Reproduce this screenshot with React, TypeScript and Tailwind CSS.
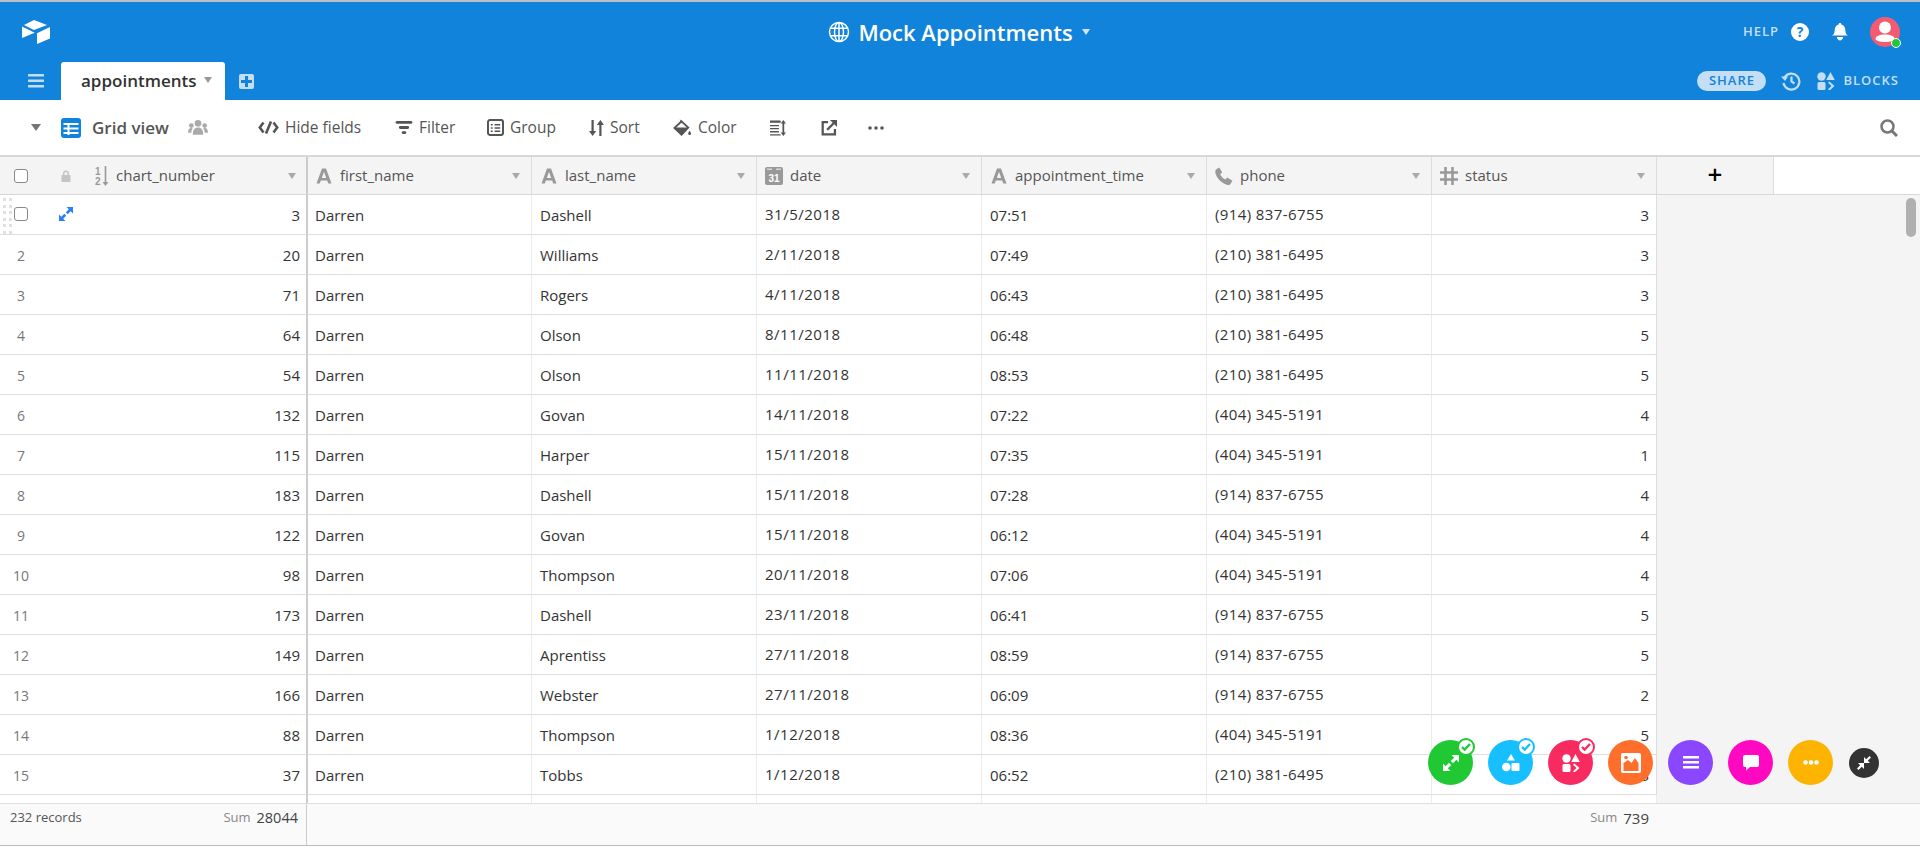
import React from "react";

const rows: [number, number, string, string, string, string, number][] = [
  [1, 3, "Dashell", "31/5/2018", "07:51", "(914) 837-6755", 3],
  [2, 20, "Williams", "2/11/2018", "07:49", "(210) 381-6495", 3],
  [3, 71, "Rogers", "4/11/2018", "06:43", "(210) 381-6495", 3],
  [4, 64, "Olson", "8/11/2018", "06:48", "(210) 381-6495", 5],
  [5, 54, "Olson", "11/11/2018", "08:53", "(210) 381-6495", 5],
  [6, 132, "Govan", "14/11/2018", "07:22", "(404) 345-5191", 4],
  [7, 115, "Harper", "15/11/2018", "07:35", "(404) 345-5191", 1],
  [8, 183, "Dashell", "15/11/2018", "07:28", "(914) 837-6755", 4],
  [9, 122, "Govan", "15/11/2018", "06:12", "(404) 345-5191", 4],
  [10, 98, "Thompson", "20/11/2018", "07:06", "(404) 345-5191", 4],
  [11, 173, "Dashell", "23/11/2018", "06:41", "(914) 837-6755", 5],
  [12, 149, "Aprentiss", "27/11/2018", "08:59", "(914) 837-6755", 5],
  [13, 166, "Webster", "27/11/2018", "06:09", "(914) 837-6755", 2],
  [14, 88, "Thompson", "1/12/2018", "08:36", "(404) 345-5191", 5],
  [15, 37, "Tobbs", "1/12/2018", "06:52", "(210) 381-6495", 3],
];

const Caret = ({ c = "#aaa", w = 8, h = 6 }: { c?: string; w?: number; h?: number }) => (
  <svg width={w} height={h} viewBox="0 0 8 6" preserveAspectRatio="none" className="shrink-0"><path d="M0 0h8L4 6z" fill={c} /></svg>
);
const AIcon = () => (
  <svg width="16" height="16" viewBox="0 0 16 16"><path d="M.5 15.500 6 .5h4l5.500 15h-3.300l-1-3H4.800l-1 3zM5.800 9.900h4.400L8 3.800z" fill="#999" /></svg>
);
const CalIcon = () => (
  <svg width="18" height="18" viewBox="0 0 18 18" className="shrink-0"><rect width="18" height="18" rx="2" fill="#999" /><rect x="2" y="1.500" width="5" height="1.500" fill="#fff" opacity=".6" /><rect x="11" y="1.500" width="5" height="1.500" fill="#fff" opacity=".6" /><text x="9" y="14.500" textAnchor="middle" fontSize="10" fontWeight="700" fill="#fff" fontFamily="Liberation Sans, sans-serif">31</text></svg>
);
const PhoneIcon = () => (
  <svg width="18" height="18" viewBox="0 0 18 18" className="shrink-0"><path d="M1 2.500 4.200.5l3 4.700-2 2c.8 2 2.800 4.200 5 5.200l2.200-1.900 5 3.300-1.900 3.200c-.6.8-2 1.300-3.500.8C6.500 16.200 2 11.500.5 6.500.1 4.900.3 3.300 1 2.500z" fill="#999" /></svg>
);
const HashIcon = () => (
  <svg width="18" height="18" viewBox="0 0 18 18" stroke="#999" strokeWidth="2.600" fill="none" className="shrink-0"><path d="M5.500 0v18M12.500 0v18M0 5.500h18M0 12.500h18" /></svg>
);
const SortNumIcon = () => (
  <svg width="14" height="20" viewBox="0 0 14 20" className="shrink-0">
    <text x="0" y="9" fontSize="10" fontWeight="700" fill="#999" fontFamily="Liberation Sans, sans-serif">1</text>
    <text x="0" y="19" fontSize="10" fontWeight="700" fill="#999" fontFamily="Liberation Sans, sans-serif">2</text>
    <path d="M9.700 0h1.600v16h2.200l-3 4-3-4h2.200z" fill="#999" />
  </svg>
);

const ExpandIcon = ({ c = "#fff", s = 14 }: { c?: string; s?: number }) => (
  <svg width={s} height={s} viewBox="0 0 14 14" fill={c}>
    <path d="M7.500 0H14V6.500L11.700 4.200 8.700 7.200 6.800 5.300 9.800 2.300z" />
    <path d="M6.500 14H0V7.500L2.300 9.800 5.300 6.800 7.200 8.700 4.200 11.700z" />
  </svg>
);

const ShapesIcon = ({ c = "#fff" }: { c?: string }) => (
  <svg width="18" height="18" viewBox="0 0 18 18" fill={c} className="shrink-0">
    <circle cx="4.500" cy="4.500" r="4.200" />
    <path d="M13.500 0l4.300 8H9.200z" />
    <rect x="0.500" y="10" width="8" height="8" rx="1.500" />
    <path d="M11 10.800l1.400-1.400L17.500 14l-5.100 4.600L11 17.200l3.500-3.200z" />
  </svg>
);

function Header({ icon, label, width, pad = "pl-[8px]" }: { icon: React.ReactNode; label: string; width: string; pad?: string }) {
  return (
    <div className={`flex h-full items-center gap-[8px] border-r border-[#dcdcdc] pr-[11px] ${pad} ${width}`}>
      <span className="flex w-[17px] shrink-0 items-center justify-center">{icon}</span>
      <span className="flex-1 text-[15px] text-[#555]">{label}</span>
      <Caret />
    </div>
  );
}

const ToolItem = ({ icon, label, className }: { icon: React.ReactNode; label: string; className: string }) => (
  <div className={`flex shrink-0 items-center gap-[6px] whitespace-nowrap text-[15.5px] text-[#555] ${className}`}>
    {icon}
    <span>{label}</span>
  </div>
);

const Check = ({ c, border }: { c: string; border: string }) => (
  <span className={`absolute right-[-2px] top-[-2px] flex h-[18px] w-[18px] items-center justify-center rounded-full border-2 bg-white ${border}`}>
    <svg width="10" height="8" viewBox="0 0 11 9" fill="none" stroke={c} strokeWidth="2.600"><path d="M1 4.500 4 7.500 10 1.200" /></svg>
  </span>
);

const Fab = ({ bg, children, check, border }: { bg: string; children: React.ReactNode; check?: string; border?: string }) => (
  <div className={`relative flex h-[45px] w-[45px] items-center justify-center rounded-full ${bg}`}>
    {children}
    {check && <Check c={check} border={border ?? ""} />}
  </div>
);

export default function App() {
  return (
    <div className="relative flex h-[848px] w-[1920px] flex-col overflow-hidden bg-white font-['Open_Sans','Noto_Sans',sans-serif]">
      {/* blue app bar */}
      <div className="h-[100px] shrink-0 border-t-2 border-[#b8bfc6] bg-[#1283da]">
        <div className="flex h-[60px] items-center pl-[22px] pr-[20px]">
          <div className="flex-1">
            <svg width="28" height="24" viewBox="0 0 28 24" fill="#fff" className="block">
              <path d="M12 0 2 5l10 5 13-5z" />
              <path d="M0 6.500v11.500l12.700-5.300z" />
              <path d="M15 13.300V24l13-5.500V7z" />
            </svg>
          </div>
          <div className="flex items-center pr-[4px]">
            <svg width="22" height="22" viewBox="0 0 22 22" fill="none" stroke="#fff" strokeWidth="1.500" className="mr-[8px]">
              <circle cx="11" cy="11" r="9.500" />
              <ellipse cx="11" cy="11" rx="4.500" ry="9.500" />
              <path d="M2.400 7.200h17.200M2.400 14.800h17.200M11 1.500v19" />
            </svg>
            <span className="text-[22px] font-semibold text-white">Mock Appointments</span>
            <span className="ml-[9px] flex"><Caret c="#cfe6f8" /></span>
          </div>
          <div className="flex flex-1 items-center justify-end">
            <span className="mr-[12px] text-[13px] font-semibold tracking-[1px] text-[#c4dff5]">HELP</span>
            <span className="mr-[23px] flex h-[18px] w-[18px] items-center justify-center rounded-full bg-white text-[14px] font-bold leading-none text-[#1283da]">?</span>
            <svg width="16" height="18" viewBox="0 0 18 20" fill="#fff" className="mr-[22px]">
              <path d="M9 0c.9 0 1.500.6 1.500 1.500C13.500 2.300 15 5 15 8c0 3.200 1 4.600 3 6H0c2-1.400 3-2.800 3-6 0-3 1.500-5.700 4.500-6.500C7.500.6 8.100 0 9 0z" />
              <path d="M5.500 15.500h7C12.300 18 10.500 19.500 9 19.500S5.700 18 5.500 15.500z" />
            </svg>
            <span className="relative flex h-[30px] w-[30px] items-center justify-center overflow-visible rounded-full bg-[#f45b73]">
              <svg width="30" height="30" viewBox="0 0 30 30" fill="#fff"><circle cx="15" cy="10.500" r="6" /><path d="M5.500 22c0-3 4-4.500 9.500-4.500S24.500 19 24.500 22c0 1.500-4 3-9.500 3s-9.500-1.500-9.500-3z" /></svg>
              <span className="absolute bottom-[-1px] right-[-1px] h-[10px] w-[10px] rounded-full border border-white bg-[#20c933]" />
            </span>
          </div>
        </div>
        <div className="flex h-[38px] items-center">
          <div className="flex w-[61px] shrink-0 items-center pl-[28px]">
            <svg width="16" height="14" viewBox="0 0 16 14" fill="#c4dff5"><rect y="0" width="16" height="2.500" rx=".5" /><rect y="5.500" width="16" height="2.500" rx=".5" /><rect y="11" width="16" height="2.500" rx=".5" /></svg>
          </div>
          <div className="flex h-[38px] w-[164px] items-center rounded-t-[3px] bg-white pl-[20px] pr-[13px]">
            <span className="flex-1 text-[17px] font-semibold text-[#333]">appointments</span>
            <span className="mb-[3px] flex"><Caret c="#999" /></span>
          </div>
          <span className="ml-[14px] flex h-[15px] w-[15px] items-center justify-center rounded-[2px] bg-[#c4dff5]">
            <svg width="11" height="11" viewBox="0 0 11 11" fill="#1283da"><path d="M4 0h3v4h4v3H7v4H4V7H0V4h4z" /></svg>
          </span>
          <div className="flex flex-1 items-center justify-end pr-[21px]">
            <span className="mr-[15px] flex h-[20px] w-[69px] items-center justify-center rounded-full bg-[#c4dff5] text-[13px] font-semibold tracking-[1px] text-[#1283da]">SHARE</span>
            <svg width="20" height="20" viewBox="0 0 20 20" fill="none" stroke="#c4dff5" strokeWidth="2.200" className="mr-[16px]">
              <path d="M3.500 6.500A8 8 0 1 1 2.500 12" />
              <path d="M0 5.500l4 4.500 3-4.500z" fill="#c4dff5" stroke="none" />
              <path d="M10.500 5.500v5l3 2" />
            </svg>
            <span className="mr-[8px] flex"><ShapesIcon c="#c4dff5" /></span>
            <span className="text-[13px] font-semibold tracking-[1px] text-[#c4dff5]">BLOCKS</span>
          </div>
        </div>
      </div>

      {/* view bar */}
      <div className="flex h-[55px] shrink-0 items-center">
        <span className="ml-[31px] flex"><Caret c="#777" w={10} h={7} /></span>
        <svg width="20" height="20" viewBox="0 0 20 20" className="ml-[20px] shrink-0">
          <rect width="20" height="20" rx="3" fill="#1283da" />
          <path d="M2.500 6h15M2.500 10.500h15M2.500 15h15M7.500 6v11" stroke="#fff" strokeWidth="2" fill="none" />
        </svg>
        <span className="ml-[11px] w-[76px] whitespace-nowrap text-[17px] font-semibold text-[#555]">Grid view</span>
        <svg width="20" height="18" viewBox="0 0 21 18" fill="#aaa" className="ml-[20px] shrink-0">
          <circle cx="10.500" cy="4" r="3.500" /><circle cx="3.500" cy="6.500" r="2.500" /><circle cx="17.500" cy="6.500" r="2.500" />
          <path d="M5 16c0-5 2-7.500 5.500-7.500S16 11 16 16z" /><path d="M0 14c0-3 1-5 3.500-5 .7 0 1.200.2 1.500.5-1 1.300-1.500 2.800-1.500 4.500zM21 14c0-3-1-5-3.500-5-.7 0-1.200.2-1.500.5 1 1.300 1.500 2.800 1.500 4.500z" />
        </svg>
        <ToolItem
          className="ml-[50px] w-[105px]"
          label="Hide fields"
          icon={<svg width="21" height="13" viewBox="0 0 21 13" fill="none" stroke="#555" strokeWidth="2.600" className="shrink-0"><path d="M5.500 1.500 1.800 6.500l3.700 5M15.500 1.500l3.700 5-3.700 5M13 .5 8 12.500" /></svg>}
        />
        <ToolItem
          className="ml-[32px] w-[61px]"
          label="Filter"
          icon={<svg width="18" height="13" viewBox="0 0 18 14" fill="#555" className="shrink-0"><rect x="0" y="0" width="18" height="3" rx="1.500" /><rect x="3.500" y="5.500" width="11" height="3" rx="1.500" /><rect x="6.500" y="11" width="5" height="3" rx="1.500" /></svg>}
        />
        <ToolItem
          className="ml-[31px] w-[69px]"
          label="Group"
          icon={<svg width="17" height="17" viewBox="0 0 18 18" fill="none" stroke="#555" strokeWidth="2.200" className="shrink-0"><rect x="1" y="1" width="16" height="16" rx="2.500" /><path d="M4 6h2M8 6h6M4 9.500h2M8 9.500h6M4 13h2M8 13h6" strokeWidth="1.600" /></svg>}
        />
        <ToolItem
          className="ml-[33px] w-[54px]"
          label="Sort"
          icon={<svg width="15" height="16" viewBox="0 0 15 16" fill="#555" className="shrink-0"><path d="M2.500 0h2.200v11h2.500L3.600 16 0 11h2.500zM10.300 16h2.200V5H15L11.400 0 7.800 5h2.500z" /></svg>}
        />
        <ToolItem
          className="ml-[30px] w-[64px]"
          label="Color"
          icon={<svg width="19" height="18" viewBox="0 0 19 19" fill="#555" className="shrink-0"><path d="M8.500 2.500 15.500 9l-7 7.500L1 9.500z" fill="none" stroke="#555" strokeWidth="2" /><path d="M1 9h15l-7.500 8.500z" /><path d="M6.500 0l3 3.500-1.500 1z" /><path d="M17 12.500c.8 1.200 1.500 2.200 1.500 3a1.500 1.500 0 0 1-3 0c0-.8.700-1.800 1.500-3z" /></svg>}
        />
        <svg width="18" height="16" viewBox="0 0 18 18" fill="#555" className="ml-[32px] shrink-0">
          <path d="M0 .5h12v2.500H0zM0 5.500h10V7H0zM0 9h10v1.500H0zM0 12.500h10V14H0zM0 16h12v1.500H0z" />
          <path d="M15 0l3 4h-2v10h2l-3 4-3-4h2V4h-2z" />
        </svg>
        <svg width="16" height="16" viewBox="0 0 17 17" fill="none" stroke="#555" strokeWidth="2.400" className="ml-[34px] shrink-0">
          <path d="M7.500 2.200H1.800v13h13V9.500" /><path d="M6.500 10.500 14 3" /><path d="M9.500 0H17v7.500z" fill="#555" stroke="none" />
        </svg>
        <svg width="16" height="4" viewBox="0 0 16 4" fill="#555" className="ml-[31px] shrink-0">
          <circle cx="2" cy="2" r="1.800" /><circle cx="8" cy="2" r="1.800" /><circle cx="14" cy="2" r="1.800" />
        </svg>
        <div className="flex-1" />
        <svg width="18" height="18" viewBox="0 0 18 18" fill="none" stroke="#777" strokeWidth="2.500" className="mr-[22px]">
          <circle cx="7.500" cy="7.500" r="6" /><path d="M12 12l5 5" strokeWidth="3" />
        </svg>
      </div>

      {/* grid */}
      <div className="flex min-h-0 flex-1 flex-col bg-[#f4f4f4]">
        <div className="flex h-[40px] shrink-0 border-y border-t-2 border-y-[#d8d8d8] bg-[#f4f4f4]">
          <div className="flex h-full w-[308px] shrink-0 items-center border-r-2 border-[#ccc] pr-[10px]">
            <span className="ml-[14px] h-[14px] w-[14px] rounded-[3px] border border-[#888] bg-white" />
            <svg width="10" height="12" viewBox="0 0 10 12" fill="#c4c4c4" className="ml-[33px]"><path d="M2 5V3.500a3 3 0 0 1 6 0V5h1.500v7H.5V5zM3.500 5h3V3.500a1.500 1.500 0 0 0-3 0z" /></svg>
            <span className="ml-[24px] flex"><SortNumIcon /></span>
            <span className="ml-[7px] flex-1 text-[15px] text-[#555]">chart_number</span>
            <Caret />
          </div>
          <Header icon={<AIcon />} label="first_name" width="w-[224px]" pad="pl-[7px]" />
          <Header icon={<AIcon />} label="last_name" width="w-[225px]" />
          <Header icon={<CalIcon />} label="date" width="w-[225px]" />
          <Header icon={<AIcon />} label="appointment_time" width="w-[225px]" />
          <Header icon={<PhoneIcon />} label="phone" width="w-[225px]" />
          <Header icon={<HashIcon />} label="status" width="w-[225px]" />
          <div className="flex h-full w-[117px] items-center justify-center border-r border-[#dcdcdc] pb-[3px] text-[26px] font-semibold leading-none text-black">+</div>
          <div className="h-full flex-1 bg-white" />
        </div>

        <div className="min-h-0 flex-1 overflow-hidden">
          {rows.map((r) => (
            <div key={r[0]} className="flex h-[40px] text-[15px] text-[#333]">
              <div className="relative flex w-[308px] shrink-0 items-center justify-between border-b border-r-2 border-b-[#dedede] border-r-[#ccc] bg-white pr-[6px] pt-[1px]">
                {r[0] === 1 ? (
                  <span className="flex items-center">
                    <span className="absolute left-[3px] top-[3px] grid grid-cols-2 gap-x-[3px] gap-y-[3.500px]">
                      {Array.from({ length: 12 }).map((_, i) => (
                        <span key={i} className="h-[3px] w-[3px] bg-[#e0e0e0]" />
                      ))}
                    </span>
                    <span className="mb-[3px] ml-[14px] h-[14px] w-[14px] rounded-[3px] border border-[#888]" />
                    <span className="mb-[3px] ml-[31px] flex"><ExpandIcon c="#2d7ff9" /></span>
                  </span>
                ) : (
                  <span className="w-[42px] text-center text-[14px] text-[#777]">{r[0]}</span>
                )}
                <span>{r[1]}</span>
              </div>
              <div className="flex w-[224px] items-center border-b border-r border-[#ececec] border-b-[#dedede] bg-white pl-[7px] pt-[1px]">Darren</div>
              <div className="flex w-[225px] items-center border-b border-r border-[#ececec] border-b-[#dedede] bg-white pl-[8px] pt-[1px]">{r[2]}</div>
              <div className="flex w-[225px] items-center border-b border-r border-[#ececec] border-b-[#dedede] bg-white pb-[1px] pl-[8px] tracking-[0.5px]">{r[3]}</div>
              <div className="flex w-[225px] items-center border-b border-r border-[#ececec] border-b-[#dedede] bg-white pl-[8px] pt-[1px]">{r[4]}</div>
              <div className="flex w-[225px] items-center border-b border-r border-[#ececec] border-b-[#dedede] bg-white pb-[1px] pl-[8px] tracking-[0.4px]">{r[5]}</div>
              <div className="flex w-[225px] items-center justify-end border-b border-r border-[#dedede] bg-white pr-[7px] pt-[1px]">{r[6]}</div>
            </div>
          ))}
          <div className="flex h-[8px]">
            <div className="w-[308px] shrink-0 border-r-2 border-[#ccc] bg-white" />
            <div className="w-[224px] border-r border-[#ececec] bg-white" />
            {[0, 1, 2, 3, 4].map((i) => (
              <div key={i} className="w-[225px] border-r border-[#ececec] bg-white" />
            ))}
          </div>
        </div>

        <div className="flex h-[43px] shrink-0 border-y border-t-[#dedede] border-b-[#bbb] bg-[#fafafa]">
          <div className="flex w-[307px] shrink-0 items-center justify-between border-r border-[#ccc] pb-[13px] pl-[10px] pr-[8px]">
            <span className="text-[13px] text-[#555]">232 records</span>
            <span className="flex items-center gap-[6px]">
              <span className="text-[13px] text-[#888]">Sum</span>
              <span className="text-[14.5px] text-[#444]">28044</span>
            </span>
          </div>
          <div className="flex w-[1351px] items-center justify-end gap-[6px] pb-[13px] pr-[9px]">
            <span className="text-[13px] text-[#888]">Sum</span>
            <span className="text-[15px] text-[#444]">739</span>
          </div>
        </div>
      </div>
      <div className="h-[2px] shrink-0 bg-white" />

      {/* scrollbar */}
      <div className="absolute left-[1906px] top-[198px] h-[39px] w-[10px] rounded-full bg-[#b0b0b0]" />

      {/* floating action buttons */}
      <div className="absolute left-[1428px] top-[740px] flex items-center gap-[15px]">
        <Fab bg="bg-[#20c933]" check="#20c933" border="border-[#20c933]"><ExpandIcon s={16} /></Fab>
        <Fab bg="bg-[#18bfff]" check="#18bfff" border="border-[#18bfff]">
          <svg width="18" height="18" viewBox="0 0 18 18" fill="#fff"><path d="M9 0l4 6.500H5z" /><circle cx="4.300" cy="13" r="4.300" /><rect x="9.500" y="9" width="8" height="8" rx="1" /></svg>
        </Fab>
        <Fab bg="bg-[#f82b60]" check="#f82b60" border="border-[#f82b60]"><ShapesIcon /></Fab>
        <Fab bg="bg-[#ff6f2c]">
          <svg width="20" height="20" viewBox="0 0 20 20"><rect width="20" height="20" rx="2" fill="#fff" /><path d="M2.500 18v-8L7 7l3.500 3L14 5l3.500 5v8z" fill="#ff6f2c" /><circle cx="5" cy="4.500" r="1.800" fill="#ff6f2c" /></svg>
        </Fab>
        <Fab bg="bg-[#8b46ff]">
          <svg width="16" height="13" viewBox="0 0 16 13" fill="#fff"><rect width="16" height="2.500" /><rect y="5" width="16" height="2.500" /><rect y="10" width="16" height="2.500" /></svg>
        </Fab>
        <Fab bg="bg-[#ff08c2]">
          <svg width="16" height="16" viewBox="0 0 16 16" fill="#fff"><path d="M2 0h12a2 2 0 0 1 2 2v8a2 2 0 0 1-2 2H7l-4 3.500V12H2a2 2 0 0 1-2-2V2a2 2 0 0 1 2-2z" /></svg>
        </Fab>
        <Fab bg="bg-[#fcb400]">
          <svg width="16" height="5" viewBox="0 0 16 5" fill="#fff"><circle cx="2.500" cy="2.500" r="2.300" /><circle cx="8" cy="2.500" r="2.300" /><circle cx="13.500" cy="2.500" r="2.300" /></svg>
        </Fab>
      </div>
      <div className="absolute left-[1849px] top-[748px] flex h-[30px] w-[30px] items-center justify-center rounded-full bg-[#333]">
        <svg width="14" height="14" viewBox="0 0 14 14" fill="#fff">
          <path d="M14 1.500 10.800 4.700 13 6.900H7V1L9.200 3.200 12.500 0z" />
          <path d="M0 12.500 3.200 9.300 1 7.100H7V13L4.800 10.800 1.500 14z" />
        </svg>
      </div>
    </div>
  );
}
